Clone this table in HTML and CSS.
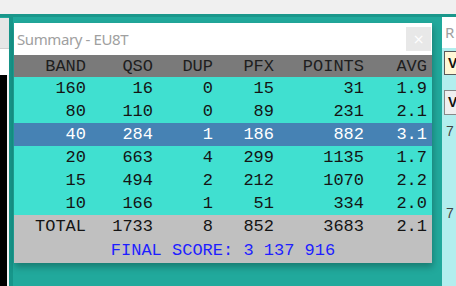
FILE: index.html
```html
<!DOCTYPE html>
<html>
<head>
<meta charset="utf-8">
<link rel="stylesheet" href="styles.css">
</head>
<body>
<div class="topbar"></div>
<div class="desk">
  <div class="leftpane">
    <div class="lp-grey"></div>
    <div class="lp-white"></div>
    <div class="lp-black"></div>
  </div>
  <div class="leftedge"></div>
  <div class="window">
    <div class="titlebar">
      <span class="title">Summary - EU8T</span>
      <span class="close">×</span>
    </div>
    <div class="row head"><span>BAND</span><span>QSO</span><span>DUP</span><span>PFX</span><span>POINTS</span><span>AVG</span></div>
    <div class="row"><span>160</span><span>16</span><span>0</span><span>15</span><span>31</span><span>1.9</span></div>
    <div class="row"><span>80</span><span>110</span><span>0</span><span>89</span><span>231</span><span>2.1</span></div>
    <div class="row sel"><span>40</span><span>284</span><span>1</span><span>186</span><span>882</span><span>3.1</span></div>
    <div class="row"><span>20</span><span>663</span><span>4</span><span>299</span><span>1135</span><span>1.7</span></div>
    <div class="row"><span>15</span><span>494</span><span>2</span><span>212</span><span>1070</span><span>2.2</span></div>
    <div class="row"><span>10</span><span>166</span><span>1</span><span>51</span><span>334</span><span>2.0</span></div>
    <div class="row total"><span>TOTAL</span><span>1733</span><span>8</span><span>852</span><span>3683</span><span>2.1</span></div>
    <div class="final">FINAL SCORE: 3 137 916</div>
  </div>
  <div class="rightpane">
    <div class="rp-title">R</div>
    <div class="rp-body">
      <div class="rp-box yellow">V</div>
      <div class="rp-box grey">V</div>
      <div class="rp-num first">7</div>
      <div class="rp-num second">7</div>
    </div>
  </div>
</div>
</body>
</html>
```
FILE: styles.css
```css
* { box-sizing: border-box; }
html, body {
  margin: 0;
  padding: 0;
  width: 456px;
  height: 286px;
  overflow: hidden;
  background: #21a99c;
}
.topbar {
  height: 14px;
  background: #f0f0f0;
}
.desk {
  display: flex;
  height: 272px;
  border-top: 3px solid #1a978b;
  align-items: flex-start;
}
.leftpane {
  width: 9px;
  height: 100%;
  display: flex;
  flex-direction: column;
  padding-top: 1px;
}
.lp-grey {
  height: 31px;
  background: #e6e6e6;
  border-bottom: 1px solid #d0d0d0;
}
.lp-white {
  height: 26px;
  background: #ffffff;
}
.lp-black {
  flex: 1;
  background: #000;
  border-right: 2px solid #f4f4f4;
}
.leftedge {
  width: 4px;
  height: 100%;
  background: #17968a;
}
.window {
  width: 418px;
  margin-top: 6px;
  margin-left: 1px;
  background: #c0c0c0;
  box-shadow: 1px 4px 7px rgba(0, 0, 0, 0.28);
  font-family: "Liberation Mono", "Courier New", monospace;
  font-size: 17px;
}
.titlebar {
  height: 32px;
  background: #ffffff;
  display: flex;
  align-items: center;
  justify-content: space-between;
  padding-left: 3px;
  padding-right: 1px;
}
.title {
  font-family: "Noto Sans", sans-serif;
  font-size: 15px;
  color: #a0a0a0;
  letter-spacing: -0.4px;
}
.close {
  width: 25px;
  height: 24px;
  background: #e8e8e8;
  color: #ffffff;
  font-family: "DejaVu Sans", sans-serif;
  font-size: 14px;
  display: flex;
  align-items: center;
  justify-content: center;
}
.row {
  display: grid;
  grid-template-columns: 72px 67px 60px 61px 90px 63px;
  height: 23px;
  align-items: center;
  background: #40e0d0;
  color: #141414;
  line-height: 1;
}
.row span { text-align: right; }
.row.head {
  height: 22px;
  background: #7a7a7a;
  color: #1e1e1e;
}
.row.sel {
  background: #4682b4;
  color: #ffffff;
}
.row.total {
  background: #c0c0c0;
  color: #141414;
}
.final {
  height: 25px;
  display: flex;
  align-items: center;
  justify-content: center;
  color: #1e1eff;
  background: #c0c0c0;
  line-height: 1;
}
.rightpane {
  width: 14px;
  height: 100%;
  margin-left: 10px;
  display: flex;
  flex-direction: column;
  overflow: hidden;
}
.rp-title {
  height: 31px;
  background: #ffffff;
  color: #a0a0a0;
  font-family: "Noto Sans", sans-serif;
  font-size: 15px;
  padding-left: 3px;
  line-height: 31px;
}
.rp-body {
  flex: 1;
  background: #b2eeee;
  display: flex;
  flex-direction: column;
  padding-top: 3px;
  padding-left: 2px;
}
.rp-box {
  width: 30px;
  height: 24px;
  border: 1px solid #5a5a5a;
  font-family: "Liberation Sans", sans-serif;
  font-weight: bold;
  font-size: 14px;
  padding-left: 3px;
  line-height: 22px;
  color: #111;
}
.rp-box.yellow { background: #fff8d6; }
.rp-box.grey {
  background: #efefef;
  border-color: #888;
  margin-top: 15px;
  height: 25px;
}
.rp-num {
  font-family: "Liberation Sans", sans-serif;
  font-size: 14px;
  color: #444;
  padding-left: 2px;
  line-height: 14px;
}
.rp-num.first { margin-top: 9px; }
.rp-num.second { margin-top: 68px; }
```
